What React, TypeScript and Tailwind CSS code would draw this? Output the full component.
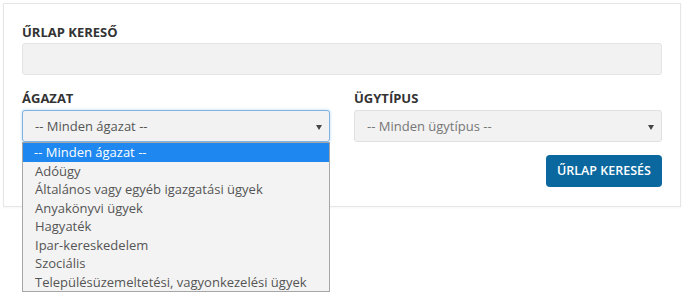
import React from "react";

const items = [
  "-- Minden ágazat --",
  "Adóügy",
  "Általános vagy egyéb igazgatási ügyek",
  "Anyakönyvi ügyek",
  "Hagyaték",
  "Ipar-kereskedelem",
  "Szociális",
  "Településüzemeltetési, vagyonkezelési ügyek",
];

function Arrow() {
  return (
    <svg width="6" height="5" viewBox="0 0 6 5" className="absolute right-[7px] top-[14px]">
      <path d="M0 0 L6 0 L3 5 Z" fill="#444" />
    </svg>
  );
}

export default function App() {
  return (
    <div
      className="w-[690px] h-[300px] bg-white pt-[3px] pl-[3px]"
      style={{ fontFamily: '"Open Sans", "Noto Sans", sans-serif' }}
    >
      <div className="w-[678px] border border-[#e6e6e6] bg-white px-[18px] pt-[19px] pb-[19px] shadow-[0_1px_2px_rgba(0,0,0,0.04)]">
        <div className="text-[13px] leading-[18px] font-bold text-[#333]">ŰRLAP KERESŐ</div>
        <div className="mt-[2px] h-[32px] rounded-[3px] border border-[#e4e4e4] bg-[#f2f2f2]" />
        <div className="mt-[14px] grid grid-cols-2 gap-x-[24px]">
          <div>
            <div className="text-[13px] leading-[18px] font-bold text-[#333]">ÁGAZAT</div>
            <div className="relative mt-[3px]">
              <div className="relative h-[32px] rounded-[3px] border border-[#7fb2e5] bg-[#f2f2f2] pl-[12px] text-[13px] leading-[31px] text-[#555] shadow-[0_0_3px_rgba(102,175,233,0.5)]">
                -- Minden ágazat --
                <Arrow />
              </div>
              <div className="absolute left-0 top-[32px] z-10 w-full border border-[#a6a6a6] bg-[#f3f3f3] text-[13px] text-[#555]">
                {items.map((t, i) => (
                  <div
                    key={t}
                    className={
                      i === 0
                        ? "h-[18.5px] leading-[18.5px] pl-[11px] bg-[#1e88f0] text-white"
                        : "h-[18.5px] leading-[18.5px] pl-[12px]"
                    }
                  >
                    {t}
                  </div>
                ))}
              </div>
            </div>
          </div>
          <div>
            <div className="text-[13px] leading-[18px] font-bold text-[#333]">ÜGYTÍPUS</div>
            <div className="relative mt-[3px] h-[32px] rounded-[3px] border border-[#e0e0e0] bg-[#f2f2f2] pl-[12px] text-[13px] leading-[31px] text-[#777]">
              -- Minden ügytípus --
              <Arrow />
            </div>
          </div>
        </div>
        <div className="mt-[13px] flex justify-end">
          <button className="h-[32px] w-[116px] rounded-[4px] bg-[#0a689f] text-[12.5px] font-semibold text-white">
            ŰRLAP KERESÉS
          </button>
        </div>
      </div>
    </div>
  );
}
